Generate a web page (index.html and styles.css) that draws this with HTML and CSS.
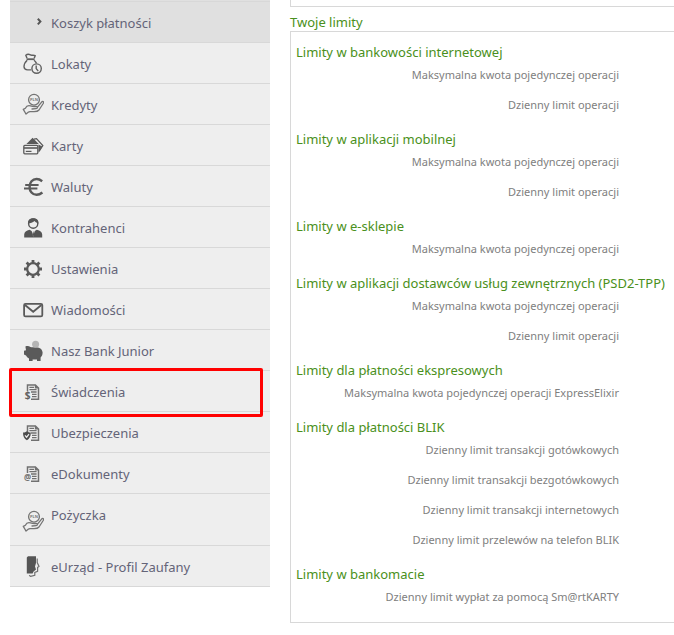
FILE: index.html
```
<!DOCTYPE html>
<html lang="pl">
<head>
  <meta charset="UTF-8">
  <meta name="viewport" content="width=device-width, initial-scale=1.0">
  <title>Twoje limity</title>
  <link rel="stylesheet" href="styles.css">
</head>
<body>

  <!-- shared icon parts -->
  <svg class="defs" width="0" height="0" aria-hidden="true">
    <symbol id="hand" viewBox="0 0 22 22">
      <g fill="none" stroke="#747474" stroke-width="1.3" stroke-linejoin="round" stroke-linecap="round">
        <circle cx="12" cy="6.7" r="5.4"/>
        <path d="M4 21L1.3 16.4L3.4 15.2C4.4 13 6.5 12.3 8.5 12.9C10.5 13.5 12 13.6 14 13.4C16 13.4 15.8 15.6 14 15.7L10 16M15.5 14.2L20 8.6C21.6 8 21.8 9.4 21.2 10.5L17 17C15.8 18.6 14.5 18.7 12 18.7H8L6.2 19.2L4 21"/>
      </g>
    </symbol>
    <symbol id="doc" viewBox="0 0 22 22">
      <path d="M5.5 11V5H13.4L16.5 8V19.3H9" fill="none" stroke="#707070" stroke-width="1.5"/>
      <path d="M12.8 4.6V8.4H17z" fill="#707070"/>
      <path d="M7.4 7.4H12M7.4 9.6H14.6M9 12H14.6M10 14.3H14.6M10 16.6H14.6" stroke="#707070" stroke-width="1.3"/>
    </symbol>
  </svg>

  <div class="page">
    <nav class="menu">
      <ul>
        <li class="sub">
          <a href="#">
            <svg class="icon" viewBox="0 0 22 22"><path d="M15.8 7.8L18.4 10.6L15.8 13.4" fill="none" stroke="#555" stroke-width="2"/></svg>
            <span>Koszyk płatności</span>
          </a>
        </li>
        <li>
          <a href="#">
            <svg class="icon" viewBox="0 0 22 22" fill="none" stroke="#606060" stroke-width="1.4" stroke-linejoin="round">
              <path d="M5 6.2L3.8 3.2C6 1.4 7.5 2.4 9 3C10.5 3.5 12 3 13.2 3.7L12.2 6.2"/>
              <path d="M4.6 7.2H12.6" stroke-width="1.8"/>
              <path d="M5.2 8.2C2.6 10.5 2 12.6 2 14.8C2.2 17 3.8 17.9 5.6 17.9H9.2M12 8.2C13.3 9.2 14 10.3 14.5 11.4"/>
              <circle cx="14.6" cy="16.6" r="4.7"/>
              <path d="M14.2 13.6V16.6L16.2 19"/>
            </svg>
            <span>Lokaty</span>
          </a>
        </li>
        <li>
          <a href="#">
            <svg class="icon" viewBox="0 0 22 22">
              <use href="#hand"/>
              <text x="12" y="8.2" text-anchor="middle" font-size="4" font-weight="bold" fill="#777">PLN</text>
            </svg>
            <span>Kredyty</span>
          </a>
        </li>
        <li>
          <a href="#">
            <svg class="icon" viewBox="0 0 22 22">
              <path d="M12 5.2L14.5 4.6L20.8 11.5L17 17.4" fill="none" stroke="#5a5a5a" stroke-width="1.3"/>
              <path d="M4.4 10L10.6 3.8L16.8 10zM16.4 10.4L20.4 12.4L16.6 18.6z" fill="#5a5a5a"/>
              <rect x="1.8" y="11.4" width="14" height="8.4" rx="1" fill="#eee" stroke="#5a5a5a" stroke-width="1.3"/>
              <path d="M2 14H15.6" stroke="#5a5a5a" stroke-width="1.6"/>
              <path d="M3.8 17.4H9.5" stroke="#5a5a5a" stroke-width="1.2"/>
            </svg>
            <span>Karty</span>
          </a>
        </li>
        <li>
          <a href="#">
            <svg class="icon" viewBox="0 0 22 22" fill="none" stroke="#5a5a5a">
              <path d="M20.2 6.2C18.4 4.8 16.7 4 14.6 4C10.4 4 7.6 7.5 7.6 11.9C7.6 16.4 10.4 19.8 14.6 19.8C16.8 19.8 18.6 19 20.4 17.5" stroke-width="2.4"/>
              <path d="M3.2 10H16.6M2 13.6H15.4" stroke-width="2"/>
            </svg>
            <span>Waluty</span>
          </a>
        </li>
        <li>
          <a href="#">
            <svg class="icon" viewBox="0 0 22 22">
              <circle cx="11.2" cy="7.6" r="4.6" fill="none" stroke="#555" stroke-width="1.4"/>
              <path d="M6 7.5C5.8 4 8 2.2 11.2 2.2C14.6 2.2 16.8 4 16.4 7.5C15 7 13.6 6.4 12.6 5C10.6 6.6 8.6 7.3 6 7.5z" fill="#555"/>
              <path d="M2.2 21.6V18.6C2.4 15.8 4.2 14.6 7.6 13.8L11.2 16L14.8 13.8C18.2 14.6 20 15.8 20.2 18.6V21.6z" fill="#555"/>
              <path d="M9.6 14.6L11.2 20.8L12.8 14.6z" fill="#eee"/>
              <path d="M11.2 15L12.2 18.8L11.2 20.6L10.2 18.8z" fill="#555"/>
            </svg>
            <span>Kontrahenci</span>
          </a>
        </li>
        <li>
          <a href="#">
            <svg class="icon" viewBox="0 0 22 22" fill="none" stroke="#5a5a5a">
              <circle cx="11" cy="12" r="5.8" stroke-width="2.2"/>
              <path d="M11 3V6M11 18V21M2 12H5M17 12H20M4.6 5.6L6.8 7.8M15.2 16.2L17.4 18.4M17.4 5.6L15.2 7.8M6.8 16.2L4.6 18.4" stroke-width="2.8"/>
            </svg>
            <span>Ustawienia</span>
          </a>
        </li>
        <li>
          <a href="#">
            <svg class="icon" viewBox="0 0 22 22" fill="none" stroke="#5a5a5a" stroke-width="1.8">
              <rect x="2.1" y="5.9" width="18.2" height="12.4" rx="1.4"/>
              <path d="M3 7L11.2 13.8L19.4 7"/>
            </svg>
            <span>Wiadomości</span>
          </a>
        </li>
        <li>
          <a href="#">
            <svg class="icon" viewBox="0 0 22 22">
              <path d="M3.4 7.6C5 6.8 7 7 8.4 8C9.5 8.2 10 8.4 11 8.3H14.5C18 8.4 20.4 10.5 20.6 13.6C20.6 16 19.8 17.4 18.6 18.6V22H15V20.4H10.6V22H7V19.4C5.6 18.6 4.6 17.6 4 16.4L2 15.6V11.8L4 11.2z" fill="#5a5a5a"/>
              <circle cx="13.6" cy="5.2" r="3.5" fill="#b5b5b5"/>
            </svg>
            <span>Nasz Bank Junior</span>
          </a>
        </li>
        <li class="marked">
          <a href="#">
            <svg class="icon" viewBox="0 0 22 22">
              <use href="#doc"/>
              <text x="5.6" y="19.4" text-anchor="middle" font-size="10" font-weight="bold" fill="#606060">$</text>
            </svg>
            <span>Świadczenia</span>
          </a>
        </li>
        <li>
          <a href="#">
            <svg class="icon" viewBox="0 0 22 22">
              <use href="#doc"/>
              <path d="M1 11.6C2.6 11.6 3.8 11 4.9 10.2C6 11 7.2 11.6 8.8 11.6C8.8 15.6 7.6 18 4.9 19.2C2.2 18 1 15.6 1 11.6z" fill="#4c4c4c"/>
              <path d="M3 14.4L4.6 16.2L7 13.2" fill="none" stroke="#eee" stroke-width="1.2"/>
            </svg>
            <span>Ubezpieczenia</span>
          </a>
        </li>
        <li>
          <a href="#">
            <svg class="icon" viewBox="0 0 22 22">
              <use href="#doc"/>
              <text x="5.6" y="18.2" text-anchor="middle" font-size="8" font-weight="bold" fill="#707070">@</text>
            </svg>
            <span>eDokumenty</span>
          </a>
        </li>
        <li class="tall">
          <a href="#">
            <svg class="icon" viewBox="0 0 22 22">
              <use href="#hand"/>
              <text x="12" y="8.2" text-anchor="middle" font-size="4" font-weight="bold" fill="#777">PLN</text>
            </svg>
            <span>Pożyczka</span>
          </a>
        </li>
        <li>
          <a href="#">
            <svg class="icon" viewBox="0 0 22 22">
              <path d="M4.8 2.4L6 1.2H14V8L13 11.4L14 14.6L11.6 16.4L10.6 18.4H4.8z" fill="#555"/>
              <path d="M15.2 3.4V7.6L17 11.4L15.6 12.4V16.4L12.8 17.4V20.4L8.6 21.4L7.2 20.2" fill="none" stroke="#707070" stroke-width="1.2"/>
            </svg>
            <span>eUrząd - Profil Zaufany</span>
          </a>
        </li>
      </ul>
    </nav>

    <main class="content">
      <div class="panel panel-end"></div>

      <h2>Twoje limity</h2>
      <div class="panel limits">
        <h3>Limity w bankowości internetowej</h3>
        <ul>
          <li>Maksymalna kwota pojedynczej operacji</li>
          <li>Dzienny limit operacji</li>
        </ul>
        <h3>Limity w aplikacji mobilnej</h3>
        <ul>
          <li>Maksymalna kwota pojedynczej operacji</li>
          <li>Dzienny limit operacji</li>
        </ul>
        <h3>Limity w e-sklepie</h3>
        <ul>
          <li>Maksymalna kwota pojedynczej operacji</li>
        </ul>
        <h3>Limity w aplikacji dostawców usług zewnętrznych (PSD2-TPP)</h3>
        <ul>
          <li>Maksymalna kwota pojedynczej operacji</li>
          <li>Dzienny limit operacji</li>
        </ul>
        <h3>Limity dla płatności ekspresowych</h3>
        <ul>
          <li>Maksymalna kwota pojedynczej operacji ExpressElixir</li>
        </ul>
        <h3>Limity dla płatności BLIK</h3>
        <ul>
          <li>Dzienny limit transakcji gotówkowych</li>
          <li>Dzienny limit transakcji bezgotówkowych</li>
          <li>Dzienny limit transakcji internetowych</li>
          <li>Dzienny limit przelewów na telefon BLIK</li>
        </ul>
        <h3>Limity w bankomacie</h3>
        <ul>
          <li>Dzienny limit wypłat za pomocą Sm@rtKARTY</li>
        </ul>
      </div>
    </main>
  </div>

</body>
</html>
```
FILE: styles.css
```
body {
  margin: 0;
  font-family: "Segoe UI", "Noto Sans", sans-serif;
  font-size: 13px;
  background-color: #ffffff;
}
ul {
  margin: 0;
  padding: 0;
  list-style: none;
}
.defs {
  position: absolute;
}
.page {
  display: flex;
  gap: 20px;
  padding-left: 10px;
}

/* left menu */
.menu {
  flex: 0 0 260px;
}
.menu ul {
  border-top: 1px solid #e0e0e0;
}
.menu li {
  position: relative;
  background-color: #eeeeee;
  border-bottom: 1px solid #d8d8d8;
}
.menu .sub {
  background-color: #e0e0e0;
  border-top: 1px solid #d8d8d8;
}
.menu a {
  display: flex;
  align-items: center;
  gap: 7px;
  padding: 9px 12px;
  line-height: 20px;
  color: #646478;
  text-decoration: none;
}
.menu a:hover {
  background-color: #e0e0e0;
}
.menu span {
  padding-top: 2px;
}
.icon {
  flex: none;
  width: 22px;
  height: 22px;
}
.menu .tall a {
  align-items: flex-end;
  padding-bottom: 13px;
  min-height: 29px;
}
.menu .tall span {
  align-self: flex-start;
}
.menu .marked::after {
  content: "";
  position: absolute;
  z-index: 1;
  top: -3px;
  right: 7px;
  bottom: -6px;
  left: -1px;
  border: 3px solid #ff0000;
  border-radius: 2px;
  pointer-events: none;
}

/* limits */
.content {
  flex: 1;
  min-width: 0;
}
.panel {
  border: 1px solid #d8d8d8;
  border-right: none;
}
.panel-end {
  height: 6px;
  border-top: none;
}
h2, h3 {
  margin: 0;
  font-size: 13px;
  font-weight: normal;
  line-height: 16px;
  color: #4a9020;
}
h2 {
  padding: 7px 0 1px;
}
.limits {
  padding: 12px 5px 10px;
}
.limits h3 {
  white-space: nowrap;
}
.limits ul + h3 {
  margin-top: 11px;
}
.limits li {
  max-width: 323px;
  font-size: 11px;
  line-height: 30px;
  text-align: right;
  color: #808080;
}
```
